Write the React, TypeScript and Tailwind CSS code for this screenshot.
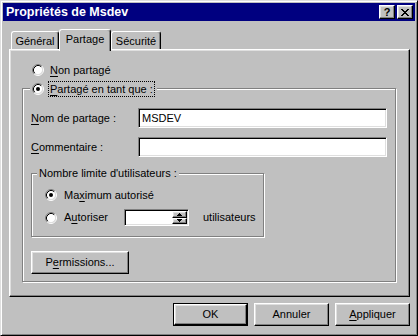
import React from "react";

const raised =
  "bg-[#c0c0c0] border border-t-white border-l-white border-r-black border-b-black shadow-[inset_-1px_-1px_0_#808080,inset_1px_1px_0_#dfdfdf]";
const sunken =
  "border border-t-[#808080] border-l-[#808080] border-r-white border-b-white shadow-[inset_1px_1px_0_#000,inset_-1px_-1px_0_#dfdfdf]";
const etched = "border border-[#808080] shadow-[inset_1px_1px_0_#fff,1px_1px_0_#fff]";

const Key = ({ c }: { c: string }) => (
  <span className="underline decoration-1 underline-offset-[2px]">{c}</span>
);

function Radio({ checked }: { checked?: boolean }) {
  return (
    <svg width="12" height="12" viewBox="0 0 12 12" className="shrink-0">
      <circle cx="6" cy="6" r="4.5" fill="#fff" />
      <path d="M2.11 9.89A5.5 5.5 0 0 1 9.89 2.11" stroke="#808080" fill="none" />
      <path d="M9.89 2.11A5.5 5.5 0 0 1 2.11 9.89" stroke="#fff" fill="none" />
      <path d="M2.82 9.18A4.5 4.5 0 0 1 9.18 2.82" stroke="#000" fill="none" />
      <path d="M9.18 2.82A4.5 4.5 0 0 1 2.82 9.18" stroke="#dfdfdf" fill="none" />
      {checked && <circle cx="6" cy="6" r="2" fill="#000" />}
    </svg>
  );
}

function Tab({ label, active, w }: { label: string; active?: boolean; w: string }) {
  return (
    <div
      className={`${w} flex items-center justify-center border-l border-t border-r border-l-white border-t-white border-r-black rounded-t-[3px] shadow-[inset_-1px_0_0_#808080] bg-[#c0c0c0] ${
        active ? "relative z-10 h-[22px] -mb-[2px] pb-[3px]" : "h-[18px] pt-[1px]"
      }`}
    >
      {label}
    </div>
  );
}

function Btn({ children, def }: { children: React.ReactNode; def?: boolean }) {
  if (def) {
    return (
      <div className="w-[75px] h-[23px] border border-black flex">
        <div className={`${raised} flex-1 flex items-center justify-center`}>{children}</div>
      </div>
    );
  }
  return (
    <div className={`${raised} w-[75px] h-[23px] flex items-center justify-center`}>{children}</div>
  );
}

function Arrow({ up }: { up?: boolean }) {
  return (
    <svg width="5" height="3" viewBox="0 0 5 3" shapeRendering="crispEdges">
      {up ? (
        <>
          <rect x="2" y="0" width="1" height="1" fill="#000" />
          <rect x="1" y="1" width="3" height="1" fill="#000" />
          <rect x="0" y="2" width="5" height="1" fill="#000" />
        </>
      ) : (
        <>
          <rect x="0" y="0" width="5" height="1" fill="#000" />
          <rect x="1" y="1" width="3" height="1" fill="#000" />
          <rect x="2" y="2" width="1" height="1" fill="#000" />
        </>
      )}
    </svg>
  );
}

export default function App() {
  return (
    <div
      className="w-[418px] h-[336px] bg-[#c0c0c0] border border-t-[#dfdfdf] border-l-[#dfdfdf] border-r-black border-b-black shadow-[inset_1px_1px_0_#fff,inset_-1px_-1px_0_#808080] p-[2px] text-[11px] text-black leading-none"
      style={{ fontFamily: '"Liberation Sans", Arial, sans-serif' }}
    >
      {/* barre de titre */}
      <div className="h-[18px] bg-[#000080] flex items-center pl-[3px] pr-[2px]">
        <span className="text-white font-bold text-[12.5px] flex-1">Propriétés de Msdev</span>
        <div className="flex gap-[2px]">
          <div className={`${raised} w-[16px] h-[14px] flex items-center justify-center font-bold text-[11px] text-black`}>
            ?
          </div>
          <div className={`${raised} w-[16px] h-[14px] flex items-center justify-center`}>
            <svg width="8" height="7" viewBox="0 0 8 7" shapeRendering="crispEdges">
              <path d="M0 0h2v1h-2zM6 0h2v1h-2zM1 1h2v1h-2zM5 1h2v1h-2zM2 2h4v1h-4zM3 3h2v1h-2zM2 4h4v1h-4zM1 5h2v1h-2zM5 5h2v1h-2zM0 6h2v1h-2zM6 6h2v1h-2z" fill="#000" />
            </svg>
          </div>
        </div>
      </div>

      <div className="pl-[6px] pr-[5px] mt-[8px]">
        {/* onglets */}
        <div className="flex items-end h-[20px] pl-[2px]">
          <Tab label="Général" w="w-[48px]" />
          <Tab label="Partage" w="w-[52px]" active />
          <Tab label="Sécurité" w="w-[50px]" />
        </div>

        <div className={`${raised} h-[248px] pt-[12px]`}>
          <div className="flex items-center h-[16px] pl-[22px] gap-[6px]">
            <Radio />
            <span>
              <Key c="N" />on partagé
            </span>
          </div>

          <div className={`${etched} relative ml-[12px] mt-[10px] w-[374px] h-[194px] pl-[8px] pt-[19px]`}>
            <div className="absolute -top-[8px] left-[7px] h-[16px] flex items-center gap-[4px] bg-[#c0c0c0] pl-[2px] pr-[2px]">
              <Radio checked />
              <span className="border border-dotted border-black px-[1px] h-[16px] flex items-center">
                <Key c="P" />artagé en tant que :
              </span>
            </div>

            <div className="flex items-center h-[20px]">
              <span className="w-[107px]">
                <Key c="N" />om de partage :
              </span>
              <div className={`${sunken} w-[249px] h-[20px] bg-white flex items-center pl-[3px] pt-[1px]`}>MSDEV</div>
            </div>
            <div className="flex items-center h-[20px] mt-[9px]">
              <span className="w-[107px]">
                <Key c="C" />ommentaire :
              </span>
              <div className={`${sunken} w-[249px] h-[20px] bg-white`} />
            </div>

            <div className={`${etched} relative mt-[16px] w-[233px] h-[64px] pt-[13px] pl-[13px]`}>
              <div className="absolute -top-[8px] left-[5px] h-[14px] flex items-center bg-[#c0c0c0] px-[2px]">
                Nombre limite d'utilisateurs :
              </div>
              <div className="flex items-center h-[16px] gap-[7px]">
                <Radio checked />
                <span>
                  Ma<Key c="x" />imum autorisé
                </span>
              </div>
              <div className="flex items-center h-[17px] mt-[6px]">
                <Radio />
                <span className="ml-[7px] w-[60px]">
                  A<Key c="u" />toriser
                </span>
                <div className={`${sunken} w-[65px] h-[17px] bg-white flex justify-end p-[1px]`}>
                  <div className="w-[15px] flex flex-col">
                    <div className={`${raised} flex-1 flex items-center justify-center`}>
                      <Arrow up />
                    </div>
                    <div className={`${raised} flex-1 flex items-center justify-center`}>
                      <Arrow />
                    </div>
                  </div>
                </div>
                <span className="ml-[14px]">utilisateurs</span>
              </div>
            </div>

            <div className={`${raised} mt-[14px] w-[98px] h-[23px] flex items-center justify-center`}>
              <span>
                P<Key c="e" />rmissions...
              </span>
            </div>
          </div>
        </div>

        {/* boutons */}
        <div className="flex justify-end gap-[6px] mt-[6px]">
          <Btn def>OK</Btn>
          <Btn>Annuler</Btn>
          <Btn>
            <span>
              <Key c="A" />ppliquer
            </span>
          </Btn>
        </div>
      </div>
    </div>
  );
}
